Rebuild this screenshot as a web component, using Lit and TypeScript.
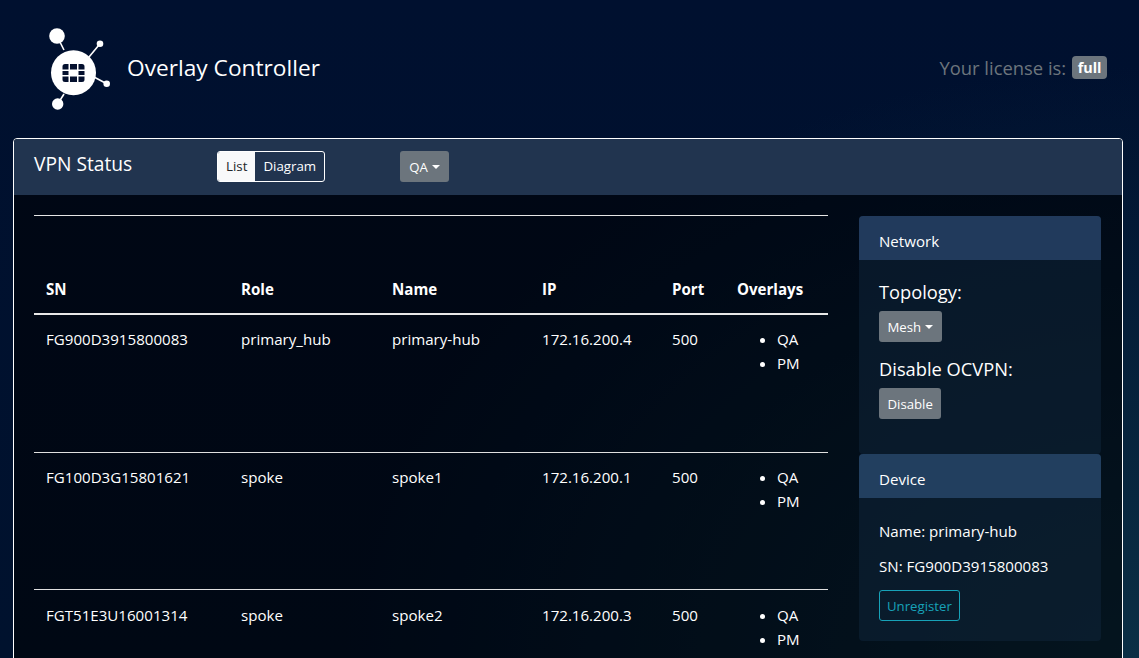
import { LitElement, html, css, svg } from "lit";
import { customElement } from "lit/decorators.js";

const rows = [
  ["FG900D3915800083", "primary_hub", "primary-hub", "172.16.200.4", "500"],
  ["FG100D3G15801621", "spoke", "spoke1", "172.16.200.1", "500"],
  ["FGT51E3U16001314", "spoke", "spoke2", "172.16.200.3", "500"],
];

const logo = svg`
  <g fill="#fff" stroke="#fff">
    <line x1="17" y1="16" x2="24" y2="30" stroke-width="1.600"/>
    <line x1="60" y1="23.700" x2="49" y2="37" stroke-width="1.600"/>
    <line x1="66.700" y1="63.700" x2="54" y2="57" stroke-width="1.600"/>
    <line x1="17.700" y1="84" x2="24" y2="74" stroke-width="1.600"/>
    <circle cx="17" cy="16" r="7.800" stroke="none"/>
    <circle cx="60" cy="23.700" r="3.300" stroke="none"/>
    <circle cx="66.700" cy="63.700" r="3.300" stroke="none"/>
    <circle cx="17.700" cy="84" r="5.700" stroke="none"/>
    <circle cx="33.500" cy="52.700" r="22.500" stroke="none"/>
  </g>
  <g fill="#04102e">
    <path d="M22.500 49.500v-3a2.500 2.500 0 0 1 2.500-2.500h3.500v5.500zM30 44h7v5.500h-7zM38.500 44h3.500a2.500 2.500 0 0 1 2.500 2.500v3h-6z"/>
    <path d="M22.500 51h6v4h-6zM38.500 51h6v4h-6z"/>
    <path d="M22.500 56.500h6v5.500H25a2.500 2.500 0 0 1-2.500-2.500zM30 56.500h7V62h-7zM38.500 56.500h6v3a2.500 2.500 0 0 1-2.500 2.500h-3.500z"/>
  </g>`;

@customElement("app-root")
export class AppRoot extends LitElement {
  static styles = css`
    :host {
      display: block;
      height: 100vh;
      overflow: hidden;
      box-sizing: border-box;
      color: #fff;
      font-family: "Open Sans", "Noto Sans", sans-serif;
      font-size: 15.100px;
      line-height: 24px;
      background:
        radial-gradient(ellipse 70% 90% at 100% 100%, #0b2f45 0%, rgba(11, 47, 69, 0) 100%),
        linear-gradient(180deg, #00102f 0%, #00122e 100%);
    }
    * { box-sizing: border-box; }
    .top {
      height: 138px;
      padding: 0 32px 0 40px;
      display: flex;
      align-items: center;
      justify-content: space-between;
    }
    .brand { display: flex; align-items: center; gap: 7px; }
    .logo { width: 80px; height: 95px; display: block; margin-top: -3px; }
    .brand-name { font-size: 22.700px; line-height: 30px; margin-top: -2px; }
    .license { display: flex; align-items: center; gap: 6px; font-size: 18.400px; color: #6c757d; margin-top: -3px; }
    .badge {
      background: #6c757d;
      color: #fff;
      font-size: 14.400px;
      font-weight: 700;
      line-height: 15px;
      padding: 4px 5.500px;
      border-radius: 4px;
    }
    .panel {
      margin: 0 16px 0 13px;
      border: 1px solid #fff;
      border-radius: 4px;
      background: rgba(0, 0, 0, 0.55);
      height: 600px;
    }
    .panel-head {
      height: 56px;
      background: #21344f;
      padding: 12px 20px;
      display: flex;
      align-items: flex-start;
      border-radius: 3px 3px 0 0;
    }
    .panel-title { width: 183px; font-size: 19.200px; line-height: 26px; }
    .seg {
      display: flex;
      height: 31px;
      border: 1px solid #fff;
      border-radius: 3px;
      overflow: hidden;
      font-size: 13.300px;
      line-height: 29px;
      margin-right: 75px;
    }
    .seg span { padding: 0 8px; }
    .seg .on { background: #f8f9fa; color: #212529; }
    .btn {
      display: inline-flex;
      align-items: center;
      background: #6c757d;
      color: #fff;
      height: 31px;
      padding: 0 8.500px;
      font-size: 13.200px;
      border-radius: 3px;
    }
    .btn.qa { padding: 0 9px; }
    .caret {
      display: inline-block;
      margin-left: 4px;
      border-top: 4px solid #fff;
      border-left: 4px solid transparent;
      border-right: 4px solid transparent;
    }
    .body {
      display: flex;
      padding: 20px 21px 0 20px;
      gap: 31px;
    }
    .main { width: 794px; flex: none; }
    .rule { border-top: 1px solid #e6e6e6; height: 1px; }
    table { width: 100%; border-collapse: collapse; table-layout: fixed; }
    th {
      text-align: left;
      font-weight: 700;
      padding: 61px 12px 12px;
      border-bottom: 2px solid #e8e8e8;
      line-height: 24px;
    }
    td {
      padding: 12px;
      height: 137px;
      vertical-align: top;
      border-bottom: 1px solid #e0e0e0;
    }
    tr:first-child td { height: 138px; }
    tr:last-child td { border-bottom: none; padding-top: 13px; }
    ul { margin: 0; padding: 0 0 0 40px; }
    .side { width: 242px; flex: none; margin-top: 1px; }
    .card { background: rgba(16, 38, 60, 0.5); border-radius: 4px; }
    .card-head {
      height: 44px;
      background: #213a5c;
      padding: 0 20px;
      line-height: 51px;
      border-radius: 4px 4px 0 0;
    }
    .dev .card-head { background: #223f5f; }
    .card-body { padding: 20px; }
    .net { height: 238px; }
    .lbl { font-size: 18.300px; line-height: 24px; margin-bottom: 7px; }
    .net .btn + .lbl { margin-top: 15px; }
    .dev { height: 187px; }
    .dev p { margin: 0 0 11px; line-height: 24px; }
    .dev .card-body { padding: 21px 20px; }
    .outline {
      background: transparent;
      border: 1px solid #17a2b8;
      color: #17a2b8;
      margin-top: 1px;
      padding: 0 7px;
    }
  `;

  render() {
    return html`
      <div class="top">
        <div class="brand">
          <svg class="logo" viewBox="0 0 80 95" role="img" aria-label="Logo">${logo}</svg>
          <div class="brand-name">Overlay Controller</div>
        </div>
        <div class="license">Your license is: <span class="badge">full</span></div>
      </div>
      <section class="panel">
        <div class="panel-head">
          <div class="panel-title">VPN Status</div>
          <div class="seg"><span class="on">List</span><span>Diagram</span></div>
          <div class="btn qa">QA<i class="caret"></i></div>
        </div>
        <div class="body">
          <div class="main">
            <div class="rule"></div>
            <table>
              <colgroup>
                <col style="width:195px" /><col style="width:151px" /><col style="width:150px" />
                <col style="width:130px" /><col style="width:65px" /><col style="width:103px" />
              </colgroup>
              <thead>
                <tr><th>SN</th><th>Role</th><th>Name</th><th>IP</th><th>Port</th><th>Overlays</th></tr>
              </thead>
              <tbody>
                ${rows.map(
                  (r) => html`<tr>
                    ${r.map((c) => html`<td>${c}</td>`)}
                    <td><ul><li>QA</li><li>PM</li></ul></td>
                  </tr>`
                )}
              </tbody>
            </table>
          </div>
          <aside class="side">
            <div class="card net">
              <div class="card-head">Network</div>
              <div class="card-body">
                <div class="lbl">Topology:</div>
                <div class="btn">Mesh<i class="caret"></i></div>
                <div class="lbl">Disable OCVPN:</div>
                <div class="btn">Disable</div>
              </div>
            </div>
            <div class="card dev">
              <div class="card-head">Device</div>
              <div class="card-body">
                <p>Name: primary-hub</p>
                <p>SN: FG900D3915800083</p>
                <div class="btn outline">Unregister</div>
              </div>
            </div>
          </aside>
        </div>
      </section>
    `;
  }
}
